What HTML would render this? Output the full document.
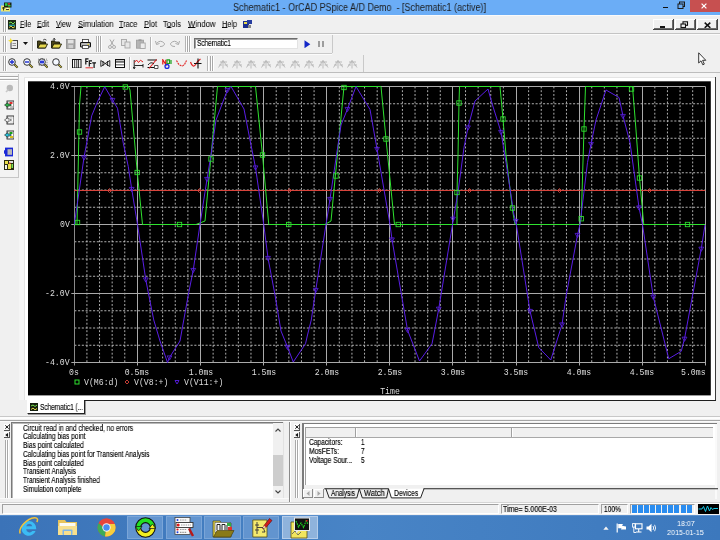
<!DOCTYPE html>
<html><head><meta charset="utf-8"><title>PSpice</title>
<style>
html,body{margin:0;padding:0;}
body{width:720px;height:540px;overflow:hidden;position:relative;background:#f0f0f0;font-family:"Liberation Sans",sans-serif;font-size:8px;color:#000;}
.abs{position:absolute;}
.ax{position:absolute;font-family:"Liberation Mono",monospace;font-size:8.2px;line-height:9px;color:#dedede;white-space:nowrap;will-change:transform;}
.t{position:absolute;white-space:nowrap;transform-origin:0 50%;-webkit-text-stroke:0.15px currentColor;will-change:transform;}
u{text-decoration:underline;text-underline-offset:0px;text-decoration-thickness:0.7px;}
</style></head><body>
<div class="abs" style="left:0px;top:0px;width:720px;height:14.5px;background:#6badf6;"></div>
<div class="abs" style="left:690px;top:0px;width:30px;height:12px;background:#c75050;"></div>
<div class="t" style="left:233.00px;top:1.70px;font-size:10px;line-height:12.00px;font-family:'Liberation Sans',sans-serif;color:#1c1c1c;transform:scaleX(0.8998);-webkit-text-stroke:0;">Schematic1 - OrCAD PSpice A/D Demo&nbsp; - [Schematic1 (active)]</div>
<svg class="abs" style="left:1px;top:1.5px" width="11" height="10" viewBox="0 0 11 10"><rect x="0" y="3.5" width="9" height="6" fill="#ece670"/><rect x="3" y="0.5" width="7.5" height="5" fill="#1a2414"/><rect x="4" y="1.2" width="2.5" height="2.6" fill="#35c83a"/><rect x="7" y="1.2" width="2" height="1.5" fill="#d83a30"/><rect x="7" y="3" width="2.5" height="1.5" fill="#35c83a"/><path d="M1 6 H4 M2.5 5 V8.5 M5 7.5 H8" stroke="#2a2a18" stroke-width="0.9"/><rect x="5.5" y="6" width="2" height="1" fill="#fff"/></svg>
<div class="abs" style="left:662.5px;top:7px;width:5px;height:1.3px;background:#111;"></div>
<svg class="abs" style="left:677px;top:1px" width="9" height="9" viewBox="0 0 9 9"><rect x="2.5" y="1" width="5" height="4.5" fill="none" stroke="#1a1a1a" stroke-width="1"/><rect x="1" y="3" width="5" height="4.5" fill="#6badf6" stroke="#1a1a1a" stroke-width="1"/></svg>
<svg class="abs" style="left:701.4px;top:2.6px" width="6" height="6" viewBox="0 0 6 6"><path d="M0.6 0.6 L5.4 5.4 M5.4 0.6 L0.6 5.4" stroke="#fff" stroke-width="1.2"/></svg>
<div class="abs" style="left:0px;top:14.5px;width:720px;height:1px;background:#fafafa;"></div>
<div class="abs" style="left:0px;top:33.2px;width:720px;height:1px;background:#c4c4c4;"></div>
<div class="abs" style="left:0px;top:34.2px;width:720px;height:1px;background:#fbfbfb;"></div>
<div class="abs" style="left:2.5px;top:17px;width:1px;height:15px;background:#a9a9a9;"></div><div class="abs" style="left:3.5px;top:17px;width:1px;height:15px;background:#fff;"></div><div class="abs" style="left:4.7px;top:17px;width:1px;height:15px;background:#a9a9a9;"></div><div class="abs" style="left:5.7px;top:17px;width:1px;height:15px;background:#fff;"></div>
<div class="abs" style="left:2.5px;top:36px;width:1px;height:16px;background:#a9a9a9;"></div><div class="abs" style="left:3.5px;top:36px;width:1px;height:16px;background:#fff;"></div><div class="abs" style="left:4.7px;top:36px;width:1px;height:16px;background:#a9a9a9;"></div><div class="abs" style="left:5.7px;top:36px;width:1px;height:16px;background:#fff;"></div>
<div class="abs" style="left:2.5px;top:56px;width:1px;height:15px;background:#a9a9a9;"></div><div class="abs" style="left:3.5px;top:56px;width:1px;height:15px;background:#fff;"></div><div class="abs" style="left:4.7px;top:56px;width:1px;height:15px;background:#a9a9a9;"></div><div class="abs" style="left:5.7px;top:56px;width:1px;height:15px;background:#fff;"></div>
<svg class="abs" style="left:8px;top:20px" width="8" height="9.5" viewBox="0 0 8 9.5"><rect width="8" height="9.5" fill="#1d2a18"/><path d="M1 3 L3 2 L5 4 L7 2" stroke="#7be34f" stroke-width="1" fill="none"/><path d="M1 7.5 L3 6 L5 8 L7 6.5" stroke="#e7d94b" stroke-width="1" fill="none"/><path d="M1 5.2 H7" stroke="#28c8d0" stroke-width="1"/></svg>
<div class="t" style="left:19.70px;top:18.70px;font-size:9.0px;line-height:10.80px;font-family:'Liberation Sans',sans-serif;color:#0a0a0a;transform:scaleX(0.7655);-webkit-text-stroke:0.05px currentColor;"><u>F</u>ile</div>
<div class="t" style="left:37.00px;top:18.70px;font-size:9.0px;line-height:10.80px;font-family:'Liberation Sans',sans-serif;color:#0a0a0a;transform:scaleX(0.7738);-webkit-text-stroke:0.05px currentColor;"><u>E</u>dit</div>
<div class="t" style="left:55.80px;top:18.70px;font-size:9.0px;line-height:10.80px;font-family:'Liberation Sans',sans-serif;color:#0a0a0a;transform:scaleX(0.7754);-webkit-text-stroke:0.05px currentColor;"><u>V</u>iew</div>
<div class="t" style="left:77.50px;top:18.70px;font-size:9.0px;line-height:10.80px;font-family:'Liberation Sans',sans-serif;color:#0a0a0a;transform:scaleX(0.8449);-webkit-text-stroke:0.05px currentColor;"><u>S</u>imulation</div>
<div class="t" style="left:119.30px;top:18.70px;font-size:9.0px;line-height:10.80px;font-family:'Liberation Sans',sans-serif;color:#0a0a0a;transform:scaleX(0.8028);-webkit-text-stroke:0.05px currentColor;"><u>T</u>race</div>
<div class="t" style="left:144.00px;top:18.70px;font-size:9.0px;line-height:10.80px;font-family:'Liberation Sans',sans-serif;color:#0a0a0a;transform:scaleX(0.8383);-webkit-text-stroke:0.05px currentColor;"><u>P</u>lot</div>
<div class="t" style="left:163.00px;top:18.70px;font-size:9.0px;line-height:10.80px;font-family:'Liberation Sans',sans-serif;color:#0a0a0a;transform:scaleX(0.8568);-webkit-text-stroke:0.05px currentColor;">T<u>o</u>ols</div>
<div class="t" style="left:187.50px;top:18.70px;font-size:9.0px;line-height:10.80px;font-family:'Liberation Sans',sans-serif;color:#0a0a0a;transform:scaleX(0.8591);-webkit-text-stroke:0.05px currentColor;"><u>W</u>indow</div>
<div class="t" style="left:221.50px;top:18.70px;font-size:9.0px;line-height:10.80px;font-family:'Liberation Sans',sans-serif;color:#0a0a0a;transform:scaleX(0.8104);-webkit-text-stroke:0.05px currentColor;"><u>H</u>elp</div>
<svg class="abs" style="left:242.5px;top:20px" width="9" height="9" viewBox="0 0 9 9"><rect x="0" y="1" width="6" height="7" fill="#1c2f8f"/><rect x="4" y="0" width="5" height="4" fill="#263c9e"/><rect x="1" y="2" width="3" height="2" fill="#e7d94b"/><rect x="5" y="5" width="3" height="3" fill="#888"/></svg>
<div class="abs" style="left:653px;top:19px;width:20.5px;height:10.7px;background:#f0f0f0;box-shadow:inset 1px 1px 0 #fff, inset -1px -1px 0 #6a6a6a;border-right:1px solid #444;border-bottom:1px solid #444;box-sizing:border-box"></div>
<div class="abs" style="left:674.5px;top:19px;width:21px;height:10.7px;background:#f0f0f0;box-shadow:inset 1px 1px 0 #fff, inset -1px -1px 0 #6a6a6a;border-right:1px solid #444;border-bottom:1px solid #444;box-sizing:border-box"></div>
<div class="abs" style="left:697px;top:19px;width:21px;height:10.7px;background:#f0f0f0;box-shadow:inset 1px 1px 0 #fff, inset -1px -1px 0 #6a6a6a;border-right:1px solid #444;border-bottom:1px solid #444;box-sizing:border-box"></div>
<div class="abs" style="left:660px;top:26px;width:4.5px;height:1.5px;background:#111;"></div>
<svg class="abs" style="left:680px;top:20.5px" width="9" height="8" viewBox="0 0 9 8"><rect x="3" y="0.8" width="4.5" height="3.5" fill="none" stroke="#111" stroke-width="1.1"/><rect x="1" y="3" width="4.5" height="3.5" fill="#f0f0f0" stroke="#111" stroke-width="1.1"/></svg>
<svg class="abs" style="left:704px;top:21.5px" width="7" height="6.5" viewBox="0 0 7 6.5"><path d="M0.7 0.6 L6.3 5.9 M6.3 0.6 L0.7 5.9" stroke="#111" stroke-width="1.5"/></svg>
<div class="abs" style="left:0px;top:53px;width:332px;height:1px;background:#c9c9c9;"></div>
<div class="abs" style="left:0px;top:54px;width:332px;height:1px;background:#fbfbfb;"></div>
<div class="abs" style="left:331.5px;top:35px;width:1px;height:18px;background:#c9c9c9;"></div>
<div class="abs" style="left:32px;top:37px;width:1px;height:14px;background:#b4b4b4;"></div><div class="abs" style="left:33px;top:37px;width:1px;height:14px;background:#fff;"></div>
<div class="abs" style="left:95.5px;top:36px;width:1px;height:16px;background:#b4b4b4;"></div><div class="abs" style="left:96.5px;top:36px;width:1px;height:16px;background:#fff;"></div>
<div class="abs" style="left:97.5px;top:36px;width:1px;height:16px;background:#a9a9a9;"></div><div class="abs" style="left:98.5px;top:36px;width:1px;height:16px;background:#fff;"></div><div class="abs" style="left:99.7px;top:36px;width:1px;height:16px;background:#a9a9a9;"></div><div class="abs" style="left:100.7px;top:36px;width:1px;height:16px;background:#fff;"></div>
<div class="abs" style="left:150px;top:37px;width:1px;height:14px;background:#b4b4b4;"></div><div class="abs" style="left:151px;top:37px;width:1px;height:14px;background:#fff;"></div>
<div class="abs" style="left:184.5px;top:36px;width:1px;height:16px;background:#b4b4b4;"></div><div class="abs" style="left:185.5px;top:36px;width:1px;height:16px;background:#fff;"></div>
<div class="abs" style="left:187px;top:36px;width:1px;height:16px;background:#a9a9a9;"></div><div class="abs" style="left:188px;top:36px;width:1px;height:16px;background:#fff;"></div><div class="abs" style="left:189.2px;top:36px;width:1px;height:16px;background:#a9a9a9;"></div><div class="abs" style="left:190.2px;top:36px;width:1px;height:16px;background:#fff;"></div>
<svg class="abs" style="left:8px;top:37.5px" width="10" height="11" viewBox="0 0 10 11"><rect x="3" y="2.5" width="6.5" height="8" fill="#ededed" stroke="#333" stroke-width="0.9"/><path d="M4.5 5.5h3.5M4.5 7.5h3.5" stroke="#8a8a8a" stroke-width="0.9"/><path d="M2.7 0 L3.6 2 L5.6 2.7 L3.6 3.5 L2.7 5.6 L1.8 3.5 L0 2.7 L1.8 2Z" fill="#f4e030"/></svg>
<svg class="abs" style="left:22.5px;top:42px" width="5" height="3" viewBox="0 0 5 3"><path d="M0 0 L5 0 L2.5 3Z" fill="#111"/></svg>
<svg class="abs" style="left:37px;top:38px" width="11" height="10.5" viewBox="0 0 11 10.5"><path d="M0.5 3 L3.5 3 L4.5 4 L8.5 4 L8.5 10 L0.5 10Z" fill="#4a4418" stroke="#1a1a08" stroke-width="0.9"/><path d="M0.8 10 L2.8 6 L10.5 6 L8.5 10Z" fill="#e6d84e" stroke="#1a1a08" stroke-width="0.9"/><path d="M6 2.2 Q7.8 0.3 9.5 2.2" stroke="#222" stroke-width="0.8" fill="none"/></svg>
<svg class="abs" style="left:50.5px;top:38px" width="11" height="10.5" viewBox="0 0 11 10.5"><path d="M0.5 3 L3.5 3 L4.5 4 L8.5 4 L8.5 10 L0.5 10Z" fill="#4a4418" stroke="#1a1a08" stroke-width="0.9"/><path d="M0.8 10 L2.8 6 L10.5 6 L8.5 10Z" fill="#e6d84e" stroke="#1a1a08" stroke-width="0.9"/><path d="M2 1.8 L3.2 0.2 L4.4 1.8 M3.2 0.4 L3.2 3" stroke="#222" stroke-width="0.8" fill="none"/></svg>
<svg class="abs" style="left:66px;top:38.5px" width="9.5" height="10" viewBox="0 0 9.5 10"><rect x="0.5" y="0.5" width="8.5" height="9" fill="#a9a9a9" stroke="#8c8c8c" stroke-width="0.8"/><rect x="2" y="0.8" width="5.5" height="3.5" fill="#e3e3e3"/><rect x="2.5" y="6" width="4.5" height="3.2" fill="#cfcfcf"/></svg>
<svg class="abs" style="left:80px;top:38.5px" width="11" height="10" viewBox="0 0 11 10"><rect x="2.5" y="0.5" width="6" height="3.5" fill="#fff" stroke="#333" stroke-width="0.8"/><rect x="0.5" y="3.5" width="10" height="4.5" rx="1" fill="#b8b8b8" stroke="#111" stroke-width="1.1"/><rect x="2.5" y="6.5" width="6" height="3" fill="#fff" stroke="#333" stroke-width="0.8"/><rect x="7.5" y="4.8" width="1.6" height="1" fill="#e8d020"/></svg>
<svg class="abs" style="left:107.5px;top:38.5px" width="8" height="10" viewBox="0 0 8 10"><path d="M2 0.5 L5.5 6.5 M6 0.5 L2.5 6.5" stroke="#a6a6a6" stroke-width="1"/><circle cx="2" cy="8" r="1.5" fill="none" stroke="#a6a6a6" stroke-width="0.9"/><circle cx="6" cy="8" r="1.5" fill="none" stroke="#a6a6a6" stroke-width="0.9"/></svg>
<svg class="abs" style="left:121px;top:38.5px" width="10" height="10" viewBox="0 0 10 10"><rect x="0.5" y="0.5" width="5" height="6" fill="#e6e6e6" stroke="#a6a6a6" stroke-width="0.9"/><rect x="4" y="3" width="5" height="6" fill="#e6e6e6" stroke="#a6a6a6" stroke-width="0.9"/></svg>
<svg class="abs" style="left:135.5px;top:38.5px" width="10" height="10" viewBox="0 0 10 10"><rect x="0.5" y="1.2" width="7" height="8" fill="#b5b5b5" stroke="#a0a0a0" stroke-width="0.9"/><rect x="2.5" y="0.3" width="3" height="1.8" fill="#9a9a9a"/><rect x="4.2" y="4" width="5" height="5.5" fill="#ececec" stroke="#a6a6a6" stroke-width="0.9"/></svg>
<svg class="abs" style="left:154.5px;top:39px" width="11" height="9" viewBox="0 0 11 9"><path d="M1.5 4.5 Q5.5 0 9.5 4.5 Q9.5 7.5 5 7.5" fill="none" stroke="#a9a9a9" stroke-width="1"/><path d="M0.5 2 L1.5 5.5 L4.5 4.5" fill="none" stroke="#a9a9a9" stroke-width="1"/></svg>
<svg class="abs" style="left:168.5px;top:39px" width="11" height="9" viewBox="0 0 11 9"><path d="M9.5 4.5 Q5.5 0 1.5 4.5 Q1.5 7.5 6 7.5" fill="none" stroke="#a9a9a9" stroke-width="1"/><path d="M10.5 2 L9.5 5.5 L6.5 4.5" fill="none" stroke="#a9a9a9" stroke-width="1"/></svg>
<div class="abs" style="left:193.5px;top:37.5px;width:104.5px;height:11.3px;background:#fff;box-sizing:border-box;border-top:1px solid #6d6d6d;border-left:1px solid #6d6d6d;border-right:1px solid #e3e3e3;border-bottom:1px solid #e3e3e3;box-shadow:inset 1px 1px 0 #a0a0a0"></div>
<div class="t" style="left:197.00px;top:38.14px;font-size:8.6px;line-height:10.32px;font-family:'Liberation Sans',sans-serif;color:#000;transform:scaleX(0.7567);">Schematic1</div>
<svg class="abs" style="left:303.5px;top:39.5px" width="7" height="8.5" viewBox="0 0 7 8.5"><path d="M0.5 0.3 L6.3 4.25 L0.5 8.2Z" fill="#1428c8"/></svg>
<div class="abs" style="left:318px;top:40.5px;width:2.2px;height:6.5px;background:#9d9d9d;"></div>
<div class="abs" style="left:322.2px;top:40.5px;width:2.2px;height:6.5px;background:#9d9d9d;"></div>
<div class="abs" style="left:0px;top:72.2px;width:720px;height:1px;background:#bdbdbd;"></div>
<div class="abs" style="left:0px;top:73.2px;width:720px;height:1px;background:#fafafa;"></div>
<div class="abs" style="left:362.5px;top:55px;width:1px;height:17px;background:#c9c9c9;"></div>
<svg class="abs" style="left:8px;top:58px" width="10.5" height="10.5" viewBox="0 0 10.5 10.5"><circle cx="4" cy="4" r="3.3" fill="#f4f8ff" stroke="#333" stroke-width="1"/><path d="M2 4 H6 M4 2 V6" stroke="#1b2ad0" stroke-width="1.3"/><path d="M6.5 6.5 L9.6 9.6" stroke="#3a3a1a" stroke-width="2"/><path d="M6.8 6.8 L9.4 9.4" stroke="#d8c440" stroke-width="0.9"/></svg>
<svg class="abs" style="left:23px;top:58px" width="10.5" height="10.5" viewBox="0 0 10.5 10.5"><circle cx="4" cy="4" r="3.3" fill="#f4f8ff" stroke="#333" stroke-width="1"/><path d="M2 4 H6" stroke="#1b2ad0" stroke-width="1.4"/><path d="M6.5 6.5 L9.6 9.6" stroke="#3a3a1a" stroke-width="2"/><path d="M6.8 6.8 L9.4 9.4" stroke="#d8c440" stroke-width="0.9"/></svg>
<svg class="abs" style="left:37.5px;top:58px" width="10.5" height="10.5" viewBox="0 0 10.5 10.5"><circle cx="4" cy="4" r="3.3" fill="#f4f8ff" stroke="#333" stroke-width="1"/><rect x="2" y="2.6" width="4" height="2.8" fill="#2b3bd8"/><rect x="0" y="1.2" width="9" height="6" fill="none" stroke="#555" stroke-width="0.7" stroke-dasharray="1,1"/><path d="M6.5 6.5 L9.6 9.6" stroke="#3a3a1a" stroke-width="2"/><path d="M6.8 6.8 L9.4 9.4" stroke="#d8c440" stroke-width="0.9"/></svg>
<svg class="abs" style="left:52px;top:58px" width="10.5" height="10.5" viewBox="0 0 10.5 10.5"><circle cx="4" cy="4" r="3.3" fill="#f4f8ff" stroke="#333" stroke-width="1"/><path d="M6.5 6.5 L9.6 9.6" stroke="#3a3a1a" stroke-width="2"/><path d="M6.8 6.8 L9.4 9.4" stroke="#d8c440" stroke-width="0.9"/></svg>
<div class="abs" style="left:67px;top:57px;width:1px;height:13px;background:#b4b4b4;"></div><div class="abs" style="left:68px;top:57px;width:1px;height:13px;background:#fff;"></div>
<svg class="abs" style="left:72px;top:58.5px" width="9.5" height="9.5" viewBox="0 0 9.5 9.5"><rect x="0.5" y="0.5" width="8.5" height="8.5" fill="#fff" stroke="#111" stroke-width="1"/><path d="M2.7 0.5V9 M4.8 0.5V9 M6.6 0.5V9" stroke="#111" stroke-width="0.9"/></svg>
<svg class="abs" style="left:85px;top:58px" width="11.5" height="10.5" viewBox="0 0 11.5 10.5"><path d="M0.8 6.5 V0.8 H3.5 M0.8 3.5 H3" stroke="#111" stroke-width="1.2" fill="none"/><path d="M4.3 8.5 V2.8 H7 M4.3 5.5 H6.5" stroke="#111" stroke-width="1.2" fill="none"/><path d="M7.2 4.8 H11 M9.1 4.8 V10" stroke="#111" stroke-width="1.2" fill="none"/><path d="M0.5 9.8 H8" stroke="#e03030" stroke-width="1"/></svg>
<svg class="abs" style="left:100px;top:59px" width="10.5" height="9" viewBox="0 0 10.5 9"><path d="M0.8 1.5 L9.8 7.5 M0.8 7.5 L9.8 1.5 M0.8 1.5 V7.5 M9.8 1.5 V7.5 M3 2 V7 M7.6 2 V7" stroke="#111" stroke-width="0.85" fill="none"/></svg>
<svg class="abs" style="left:114.5px;top:59px" width="10" height="9" viewBox="0 0 10 9"><rect x="0.5" y="0.5" width="9" height="8" fill="#fff" stroke="#111" stroke-width="1"/><path d="M1 3.2H9 M1 5.8H9" stroke="#8c8c8c" stroke-width="1.6"/><path d="M0.5 2.2H9.5" stroke="#111" stroke-width="0.7"/></svg>
<div class="abs" style="left:128.5px;top:57px;width:1px;height:13px;background:#b4b4b4;"></div><div class="abs" style="left:129.5px;top:57px;width:1px;height:13px;background:#fff;"></div>
<svg class="abs" style="left:133px;top:58.5px" width="11" height="10" viewBox="0 0 11 10"><path d="M1.2 1 V9.5 M0.2 8 L1.2 9.8 L2.2 8" stroke="#111" stroke-width="0.9" fill="none"/><path d="M1.5 3.5 L3.5 1 L5.5 3.5 L7.5 1.2 L10 3" stroke="#e02020" stroke-width="1" fill="none"/><path d="M1.5 6.5 H10 M10 5 V8.5" stroke="#111" stroke-width="0.9"/></svg>
<svg class="abs" style="left:147px;top:58.5px" width="11.5" height="10" viewBox="0 0 11.5 10"><path d="M0.5 1 H10 M0.5 8.5 H7" stroke="#111" stroke-width="1" fill="none"/><path d="M9.5 0.5 L2 9.5" stroke="#e02020" stroke-width="1.1"/><path d="M1 6 Q4 2 7 5" stroke="#111" stroke-width="0.9" fill="none"/><path d="M7.5 6.5 h3.5 v3 h-3.5z" fill="#fff" stroke="#111" stroke-width="0.7"/></svg>
<svg class="abs" style="left:162px;top:58.5px" width="10.5" height="10" viewBox="0 0 10.5 10"><path d="M0.8 5.5 V0.8 L3.8 5.5 V0.8" stroke="#e01818" stroke-width="1.2" fill="none"/><path d="M5 0.8 V4.5 H7.5 V0.8 Z" stroke="#18a018" stroke-width="1.2" fill="none"/><path d="M9 1 V5" stroke="#18a018" stroke-width="1.2"/><circle cx="5" cy="7.5" r="2" fill="none" stroke="#1828e0" stroke-width="1.3"/></svg>
<svg class="abs" style="left:176px;top:59px" width="11" height="9" viewBox="0 0 11 9"><path d="M0.5 1.5 L2.5 5 L4.5 6.5 L6.5 7 L8.5 5.5 L10.5 1.5" stroke="#e02020" stroke-width="1.1" fill="none" stroke-dasharray="2,0.8"/></svg>
<svg class="abs" style="left:190px;top:58px" width="11.5" height="11" viewBox="0 0 11.5 11"><path d="M0.5 4 Q3 11 6 6 Q8 2.5 10.5 1" stroke="#e02020" stroke-width="1.2" fill="none"/><path d="M8 0.5 V10.5 M4 5.5 H11.5" stroke="#111" stroke-width="1.1"/></svg>
<div class="abs" style="left:207px;top:56px;width:1px;height:15px;background:#b4b4b4;"></div><div class="abs" style="left:208px;top:56px;width:1px;height:15px;background:#fff;"></div>
<div class="abs" style="left:209.5px;top:56px;width:1px;height:15px;background:#a9a9a9;"></div><div class="abs" style="left:210.5px;top:56px;width:1px;height:15px;background:#fff;"></div><div class="abs" style="left:211.7px;top:56px;width:1px;height:15px;background:#a9a9a9;"></div><div class="abs" style="left:212.7px;top:56px;width:1px;height:15px;background:#fff;"></div>
<svg class="abs" style="left:217.5px;top:58.5px" width="10.5" height="10" viewBox="0 0 10.5 10"><path d="M0.5 8.5 L5 1.5 L10 8.5 M2 3 L9 3 M5 1.5 V9.5 M1 6 H4 M6.5 6 H10" stroke="#b4b4b4" stroke-width="0.85" fill="none"/></svg>
<svg class="abs" style="left:231.9px;top:58.5px" width="10.5" height="10" viewBox="0 0 10.5 10"><path d="M0.5 8.5 L5 1.5 L10 8.5 M2 3 L9 3 M5 1.5 V9.5 M1 6 H4 M6.5 6 H10" stroke="#b4b4b4" stroke-width="0.85" fill="none"/></svg>
<svg class="abs" style="left:246.3px;top:58.5px" width="10.5" height="10" viewBox="0 0 10.5 10"><path d="M0.5 8.5 L5 1.5 L10 8.5 M2 3 L9 3 M5 1.5 V9.5 M1 6 H4 M6.5 6 H10" stroke="#b4b4b4" stroke-width="0.85" fill="none"/></svg>
<svg class="abs" style="left:260.7px;top:58.5px" width="10.5" height="10" viewBox="0 0 10.5 10"><path d="M0.5 8.5 L5 1.5 L10 8.5 M2 3 L9 3 M5 1.5 V9.5 M1 6 H4 M6.5 6 H10" stroke="#b4b4b4" stroke-width="0.85" fill="none"/></svg>
<svg class="abs" style="left:275.1px;top:58.5px" width="10.5" height="10" viewBox="0 0 10.5 10"><path d="M0.5 8.5 L5 1.5 L10 8.5 M2 3 L9 3 M5 1.5 V9.5 M1 6 H4 M6.5 6 H10" stroke="#b4b4b4" stroke-width="0.85" fill="none"/></svg>
<svg class="abs" style="left:289.5px;top:58.5px" width="10.5" height="10" viewBox="0 0 10.5 10"><path d="M0.5 8.5 L5 1.5 L10 8.5 M2 3 L9 3 M5 1.5 V9.5 M1 6 H4 M6.5 6 H10" stroke="#b4b4b4" stroke-width="0.85" fill="none"/></svg>
<svg class="abs" style="left:303.9px;top:58.5px" width="10.5" height="10" viewBox="0 0 10.5 10"><path d="M0.5 8.5 L5 1.5 L10 8.5 M2 3 L9 3 M5 1.5 V9.5 M1 6 H4 M6.5 6 H10" stroke="#b4b4b4" stroke-width="0.85" fill="none"/></svg>
<svg class="abs" style="left:318.3px;top:58.5px" width="10.5" height="10" viewBox="0 0 10.5 10"><path d="M0.5 8.5 L5 1.5 L10 8.5 M2 3 L9 3 M5 1.5 V9.5 M1 6 H4 M6.5 6 H10" stroke="#b4b4b4" stroke-width="0.85" fill="none"/></svg>
<svg class="abs" style="left:332.7px;top:58.5px" width="10.5" height="10" viewBox="0 0 10.5 10"><path d="M0.5 8.5 L5 1.5 L10 8.5 M2 3 L9 3 M5 1.5 V9.5 M1 6 H4 M6.5 6 H10" stroke="#b4b4b4" stroke-width="0.85" fill="none"/></svg>
<svg class="abs" style="left:347.1px;top:58.5px" width="10.5" height="10" viewBox="0 0 10.5 10"><path d="M0.5 8.5 L5 1.5 L10 8.5 M2 3 L9 3 M5 1.5 V9.5 M1 6 H4 M6.5 6 H10" stroke="#b4b4b4" stroke-width="0.85" fill="none"/></svg>
<svg class="abs" style="left:698px;top:52px" width="9" height="14" viewBox="0 0 9 14"><path d="M0.7 0.8 V11 L3 8.8 L4.8 12.8 L6.3 12.1 L4.6 8.3 L7.8 8.3 Z" fill="#fff" stroke="#222" stroke-width="0.9"/></svg>
<div class="abs" style="left:0px;top:74px;width:18.5px;height:103.5px;background:#f3f3f3;border-right:1px solid #c6c6c6;border-bottom:1px solid #c6c6c6;box-sizing:border-box"></div>
<div class="abs" style="left:0px;top:76.3px;width:18px;height:1px;background:#a9a9a9;"></div>
<div class="abs" style="left:0px;top:77.3px;width:18px;height:1px;background:#fff;"></div>
<div class="abs" style="left:0px;top:78.8px;width:18px;height:1px;background:#a9a9a9;"></div>
<div class="abs" style="left:0px;top:79.8px;width:18px;height:1px;background:#fff;"></div>
<svg class="abs" style="left:4.5px;top:83.5px" width="9" height="9" viewBox="0 0 9 9"><circle cx="4.8" cy="4" r="3.2" fill="#b9b9b9"/><path d="M1 8 L3.5 5.5" stroke="#c9c9c9" stroke-width="1.6"/></svg>
<svg class="abs" style="left:3.5px;top:100px" width="10.5" height="10" viewBox="0 0 10.5 10"><rect x="3" y="1" width="7" height="8" fill="#fdfdfd" stroke="#222" stroke-width="0.9"/><path d="M0.5 5 L4 2.5 V4 H7 V6 H4 V7.5Z" fill="#2fb04a" stroke="#222" stroke-width="0.6"/><rect x="5.5" y="2" width="3" height="2" fill="#e03030"/><rect x="6" y="6" width="3" height="2" fill="#c0c0c0"/></svg>
<svg class="abs" style="left:3.5px;top:115px" width="10.5" height="10" viewBox="0 0 10.5 10"><rect x="3" y="1" width="7" height="8" fill="#fdfdfd" stroke="#222" stroke-width="0.9"/><path d="M0.5 5 L4 2.5 V4 H7 V6 H4 V7.5Z" fill="#f4f4f4" stroke="#222" stroke-width="0.6"/><rect x="5.5" y="2" width="3" height="2" fill="#d8d8d8"/><rect x="6" y="6" width="3" height="2" fill="#e8e8e8"/></svg>
<svg class="abs" style="left:3.5px;top:129.5px" width="10.5" height="10" viewBox="0 0 10.5 10"><rect x="3" y="1" width="7" height="8" fill="#fdfdfd" stroke="#222" stroke-width="0.9"/><path d="M0.5 5 L4 2.5 V4 H7 V6 H4 V7.5Z" fill="#28c0d8" stroke="#222" stroke-width="0.6"/><rect x="5.5" y="2" width="3" height="2" fill="#18a018"/><rect x="6" y="6" width="3" height="2" fill="#d8c020"/></svg>
<svg class="abs" style="left:4px;top:146.5px" width="9.5" height="10" viewBox="0 0 9.5 10"><rect x="1" y="0.6" width="8" height="8.8" fill="#1a28d8"/><rect x="3.5" y="2.2" width="4.5" height="5.6" fill="#b8b8b8"/><path d="M0 3 L3.5 5 L0 7Z" fill="#1a28d8"/></svg>
<svg class="abs" style="left:3.5px;top:159.5px" width="10" height="10" viewBox="0 0 10 10"><rect width="10" height="10" fill="#2a2a12"/><rect x="1" y="1" width="3" height="3" fill="#e7dc4a"/><rect x="5" y="1" width="4" height="2" fill="#e0e0e0"/><rect x="1" y="5" width="2" height="4" fill="#f0f0f0"/><rect x="4" y="4" width="3" height="5" fill="#e7dc4a"/><rect x="7.5" y="4" width="1.5" height="4" fill="#7be34f"/><rect x="5" y="2.5" width="1.5" height="1.5" fill="#e05020"/></svg>
<div class="abs" style="left:19px;top:73.2px;width:697px;height:327px;background:#f5f5f5;box-sizing:border-box;border-right:1px solid #3c3c3c;"></div>
<div class="abs" style="left:24px;top:77.3px;width:691px;height:322.5px;background:#e4e4e4;"></div>
<div class="abs" style="left:25px;top:78.3px;width:690px;height:321.4px;background:#fff;"></div>
<div class="abs" style="left:19px;top:399.7px;width:8px;height:2px;background:#f0f0f0;"></div>
<div class="abs" style="left:716px;top:73.2px;width:4px;height:4.5px;background:#f0f0f0;"></div>
<div class="abs" style="left:715px;top:73.2px;width:1px;height:4.3px;background:#f5f5f5;"></div>
<div class="abs" style="left:27px;top:400px;width:57.5px;height:14px;background:#fff;box-sizing:border-box;border-left:1px solid #fff;border-right:1px solid #222;border-bottom:1px solid #222;box-shadow:1px 1px 0 #9a9a9a"></div>
<div class="abs" style="left:84.5px;top:400px;width:631px;height:1px;background:#1e1e1e;"></div>
<svg class="abs" style="left:29.5px;top:402.5px" width="8" height="8.5" viewBox="0 0 8 8.5"><rect width="8" height="8.5" fill="#15200f"/><path d="M1 3 L3 2 L5 3.5 L7 2" stroke="#7be34f" stroke-width="1" fill="none"/><path d="M1 6.5 L3 5 L5 6.8 L7 5.5" stroke="#e7d94b" stroke-width="1" fill="none"/></svg>
<div class="t" style="left:39.50px;top:401.80px;font-size:8.5px;line-height:10.20px;font-family:'Liberation Sans',sans-serif;color:#000;transform:scaleX(0.7586);">Schematic1 (...</div>
<div class="abs" style="left:0px;top:416.3px;width:720px;height:1px;background:#c8c8c8;"></div>
<div class="abs" style="left:0px;top:417.3px;width:720px;height:2.2px;background:#fdfdfd;"></div>
<div class="abs" style="left:0px;top:419.7px;width:720px;height:1px;background:#a5a5a5;"></div>
<div class="abs" style="left:0px;top:420.7px;width:720px;height:1px;background:#fafafa;"></div>
<div class="abs" style="left:11px;top:422px;width:272px;height:76px;background:#fff;box-sizing:border-box;border-top:1px solid #7a7a7a;border-left:1px solid #7a7a7a;box-shadow:inset 1px 1px 0 #b8b8b8"></div>
<div class="abs" style="left:283px;top:422px;width:1px;height:76px;background:#e2e2e2;"></div>
<div class="abs" style="left:289px;top:421.7px;width:1px;height:80px;background:#8a8a8a;"></div>
<div class="abs" style="left:290px;top:421.7px;width:1px;height:80px;background:#fff;"></div>
<div class="abs" style="left:0px;top:498px;width:289px;height:1px;background:#fafafa;"></div>
<div class="abs" style="left:3.7px;top:424.3px;width:6px;height:6.3px;background:#f0f0f0;box-sizing:border-box;border-right:1px solid #555;border-bottom:1px solid #555;box-shadow:inset 1px 1px 0 #fff"></div><svg class="abs" style="left:4.5px;top:425.2px" width="4" height="4" viewBox="0 0 4 4"><path d="M0.3 0.3L3.7 3.7M3.7 0.3L0.3 3.7" stroke="#111" stroke-width="0.9"/></svg>
<div class="abs" style="left:3.7px;top:431.5px;width:6px;height:6.3px;background:#f0f0f0;box-sizing:border-box;border-right:1px solid #555;border-bottom:1px solid #555;box-shadow:inset 1px 1px 0 #fff"></div><svg class="abs" style="left:4.7px;top:432.5px" width="3.5" height="4" viewBox="0 0 3.5 4"><path d="M3 0 L0.3 2 L3 4Z" fill="#111"/></svg>
<div class="abs" style="left:5px;top:440px;width:1px;height:58px;background:#a9a9a9;"></div>
<div class="abs" style="left:6px;top:440px;width:1px;height:58px;background:#fff;"></div>
<div class="abs" style="left:7.3px;top:440px;width:1px;height:58px;background:#a9a9a9;"></div>
<div class="abs" style="left:8.3px;top:440px;width:1px;height:58px;background:#fff;"></div>
<div class="t" style="left:23.00px;top:422.68px;font-size:8.7px;line-height:10.44px;font-family:'Liberation Sans',sans-serif;color:#000;transform:scaleX(0.7604);">Circuit read in and checked, no errors</div>
<div class="t" style="left:23.00px;top:431.42px;font-size:8.7px;line-height:10.44px;font-family:'Liberation Sans',sans-serif;color:#000;transform:scaleX(0.7558);">Calculating bias point</div>
<div class="t" style="left:23.00px;top:440.16px;font-size:8.7px;line-height:10.44px;font-family:'Liberation Sans',sans-serif;color:#000;transform:scaleX(0.7645);">Bias point calculated</div>
<div class="t" style="left:23.00px;top:448.90px;font-size:8.7px;line-height:10.44px;font-family:'Liberation Sans',sans-serif;color:#000;transform:scaleX(0.7539);">Calculating bias point for Transient Analysis</div>
<div class="t" style="left:23.00px;top:457.64px;font-size:8.7px;line-height:10.44px;font-family:'Liberation Sans',sans-serif;color:#000;transform:scaleX(0.7645);">Bias point calculated</div>
<div class="t" style="left:23.00px;top:466.38px;font-size:8.7px;line-height:10.44px;font-family:'Liberation Sans',sans-serif;color:#000;transform:scaleX(0.7542);">Transient Analysis</div>
<div class="t" style="left:23.00px;top:475.12px;font-size:8.7px;line-height:10.44px;font-family:'Liberation Sans',sans-serif;color:#000;transform:scaleX(0.7499);">Transient Analysis finished</div>
<div class="t" style="left:23.00px;top:483.86px;font-size:8.7px;line-height:10.44px;font-family:'Liberation Sans',sans-serif;color:#000;transform:scaleX(0.7468);">Simulation complete</div>
<div class="abs" style="left:273px;top:423px;width:9.7px;height:74.5px;background:#f0f0f0;"></div>
<div class="abs" style="left:273px;top:454.5px;width:9.7px;height:31.5px;background:#cdcdcd;"></div>
<svg class="abs" style="left:275px;top:427.5px" width="6" height="4" viewBox="0 0 6 4"><path d="M0.5 3.5 L3 1 L5.5 3.5" stroke="#444" stroke-width="1.1" fill="none"/></svg>
<svg class="abs" style="left:275px;top:490px" width="6" height="4" viewBox="0 0 6 4"><path d="M0.5 0.5 L3 3 L5.5 0.5" stroke="#444" stroke-width="1.1" fill="none"/></svg>
<div class="abs" style="left:293.7px;top:424.3px;width:6px;height:6.3px;background:#f0f0f0;box-sizing:border-box;border-right:1px solid #555;border-bottom:1px solid #555;box-shadow:inset 1px 1px 0 #fff"></div><svg class="abs" style="left:294.5px;top:425.2px" width="4" height="4" viewBox="0 0 4 4"><path d="M0.3 0.3L3.7 3.7M3.7 0.3L0.3 3.7" stroke="#111" stroke-width="0.9"/></svg>
<div class="abs" style="left:293.7px;top:431.8px;width:6px;height:6.3px;background:#f0f0f0;box-sizing:border-box;border-right:1px solid #555;border-bottom:1px solid #555;box-shadow:inset 1px 1px 0 #fff"></div><svg class="abs" style="left:294.7px;top:432.8px" width="3.5" height="4" viewBox="0 0 3.5 4"><path d="M3 0 L0.3 2 L3 4Z" fill="#111"/></svg>
<div class="abs" style="left:295px;top:440px;width:1px;height:58px;background:#a9a9a9;"></div>
<div class="abs" style="left:296px;top:440px;width:1px;height:58px;background:#fff;"></div>
<div class="abs" style="left:297.3px;top:440px;width:1px;height:58px;background:#a9a9a9;"></div>
<div class="abs" style="left:298.3px;top:440px;width:1px;height:58px;background:#fff;"></div>
<div class="abs" style="left:302px;top:422.7px;width:415px;height:1.4px;background:#7c7c7c;"></div>
<div class="abs" style="left:302px;top:422.7px;width:1.6px;height:76px;background:#7c7c7c;"></div>
<div class="abs" style="left:303.6px;top:424.1px;width:411.4px;height:61px;background:#fff;"></div>
<div class="abs" style="left:304.5px;top:426.8px;width:408.5px;height:1px;background:#a0a0a0;"></div>
<div class="abs" style="left:304.5px;top:427.8px;width:408.5px;height:9.5px;background:#f0f0f0;"></div>
<div class="abs" style="left:304.5px;top:437.3px;width:408.5px;height:1px;background:#a8a8a8;"></div>
<div class="abs" style="left:304.5px;top:426.8px;width:1px;height:58px;background:#a0a0a0;"></div>
<div class="abs" style="left:354.5px;top:427.8px;width:1px;height:9.5px;background:#a0a0a0;"></div>
<div class="abs" style="left:355.5px;top:427.8px;width:1px;height:9.5px;background:#fff;"></div>
<div class="abs" style="left:511px;top:427.8px;width:1px;height:9.5px;background:#a0a0a0;"></div>
<div class="abs" style="left:512px;top:427.8px;width:1px;height:9.5px;background:#fff;"></div>
<div class="abs" style="left:715px;top:424.1px;width:2px;height:75px;background:#fafafa;"></div>
<div class="t" style="left:308.70px;top:437.08px;font-size:8.7px;line-height:10.44px;font-family:'Liberation Sans',sans-serif;color:#000;transform:scaleX(0.7614);">Capacitors:</div>
<div class="t" style="left:360.50px;top:437.08px;font-size:8.7px;line-height:10.44px;font-family:'Liberation Sans',sans-serif;color:#000;transform:scaleX(0.7441);">1</div>
<div class="t" style="left:308.70px;top:445.83px;font-size:8.7px;line-height:10.44px;font-family:'Liberation Sans',sans-serif;color:#000;transform:scaleX(0.7758);">MosFETs:</div>
<div class="t" style="left:360.50px;top:445.83px;font-size:8.7px;line-height:10.44px;font-family:'Liberation Sans',sans-serif;color:#000;transform:scaleX(0.7441);">7</div>
<div class="t" style="left:308.70px;top:454.58px;font-size:8.7px;line-height:10.44px;font-family:'Liberation Sans',sans-serif;color:#000;transform:scaleX(0.7687);">Voltage Sour...</div>
<div class="t" style="left:360.50px;top:454.58px;font-size:8.7px;line-height:10.44px;font-family:'Liberation Sans',sans-serif;color:#000;transform:scaleX(0.7441);">5</div>
<div class="abs" style="left:303px;top:488.75px;width:9.8px;height:9.7px;background:#f0f0f0;box-sizing:border-box;border-right:1px solid #8a8a8a;border-bottom:1px solid #8a8a8a;box-shadow:inset 1px 1px 0 #fff"></div>
<div class="abs" style="left:313.6px;top:488.75px;width:10px;height:9.7px;background:#f0f0f0;box-sizing:border-box;border-right:1px solid #8a8a8a;border-bottom:1px solid #8a8a8a;box-shadow:inset 1px 1px 0 #fff"></div>
<svg class="abs" style="left:305.8px;top:491.2px" width="4" height="5" viewBox="0 0 4 5"><path d="M3.5 0 L0.5 2.5 L3.5 5Z" fill="#a5a5a5"/></svg>
<svg class="abs" style="left:317px;top:491.2px" width="4" height="5" viewBox="0 0 4 5"><path d="M0.5 0 L3.5 2.5 L0.5 5Z" fill="#a5a5a5"/></svg>
<svg class="abs" style="left:320px;top:485px" width="398" height="14" viewBox="0 0 398 14"><path d="M68.5 3.75 L71.4 12.9 H100.6 L104 3.75Z" fill="#fff"/><path d="M4.3 3.75 H68.5 M103.5 3.75 H398" stroke="#222" stroke-width="1"/><path d="M5.9 3.75 L9.2 12.9 H36.8 L39.3 3.75 L42.3 12.9 H66.6 L68.5 3.75 L71.4 12.9 H100.6 L104 3.75" fill="none" stroke="#222" stroke-width="1"/></svg>
<div class="t" style="left:331.10px;top:488.30px;font-size:8.5px;line-height:10.20px;font-family:'Liberation Sans',sans-serif;color:#000;transform:scaleX(0.7551);">Analysis</div>
<div class="t" style="left:364.20px;top:488.30px;font-size:8.5px;line-height:10.20px;font-family:'Liberation Sans',sans-serif;color:#000;transform:scaleX(0.8749);">Watch</div>
<div class="t" style="left:394.00px;top:488.30px;font-size:8.5px;line-height:10.20px;font-family:'Liberation Sans',sans-serif;color:#000;transform:scaleX(0.8038);">Devices</div>
<div class="abs" style="left:0px;top:501.7px;width:720px;height:1px;background:#d5d5d5;"></div>
<div class="abs" style="left:0px;top:502.7px;width:720px;height:1px;background:#fdfdfd;"></div>
<div class="abs" style="left:2px;top:503.7px;width:497px;height:10.3px;background:#f0f0f0;box-sizing:border-box;border-top:1px solid #a0a0a0;border-left:1px solid #a0a0a0;border-right:1px solid #fff;border-bottom:1px solid #fff"></div>
<div class="abs" style="left:500.5px;top:503.7px;width:98.5px;height:10.3px;background:#f0f0f0;box-sizing:border-box;border-top:1px solid #a0a0a0;border-left:1px solid #a0a0a0;border-right:1px solid #fff;border-bottom:1px solid #fff"></div>
<div class="abs" style="left:600.5px;top:503.7px;width:27.5px;height:10.3px;background:#f0f0f0;box-sizing:border-box;border-top:1px solid #a0a0a0;border-left:1px solid #a0a0a0;border-right:1px solid #fff;border-bottom:1px solid #fff"></div>
<div class="abs" style="left:630px;top:503.7px;width:65px;height:10.3px;background:#f0f0f0;box-sizing:border-box;border-top:1px solid #a0a0a0;border-left:1px solid #a0a0a0;border-right:1px solid #fff;border-bottom:1px solid #fff"></div>
<div class="t" style="left:503.30px;top:503.74px;font-size:8.6px;line-height:10.32px;font-family:'Liberation Sans',sans-serif;color:#000;transform:scaleX(0.8196);">Time= 5.000E-03</div>
<div class="t" style="left:604.20px;top:503.74px;font-size:8.6px;line-height:10.32px;font-family:'Liberation Sans',sans-serif;color:#000;transform:scaleX(0.7729);">100%</div>
<div class="abs" style="left:631.7px;top:505px;width:5.1px;height:8px;background:#2a8df0;"></div>
<div class="abs" style="left:637.8000000000001px;top:505px;width:5.1px;height:8px;background:#2a8df0;"></div>
<div class="abs" style="left:643.9000000000001px;top:505px;width:5.1px;height:8px;background:#2a8df0;"></div>
<div class="abs" style="left:650.0px;top:505px;width:5.1px;height:8px;background:#2a8df0;"></div>
<div class="abs" style="left:656.1px;top:505px;width:5.1px;height:8px;background:#2a8df0;"></div>
<div class="abs" style="left:662.2px;top:505px;width:5.1px;height:8px;background:#2a8df0;"></div>
<div class="abs" style="left:668.3000000000001px;top:505px;width:5.1px;height:8px;background:#2a8df0;"></div>
<div class="abs" style="left:674.4000000000001px;top:505px;width:5.1px;height:8px;background:#2a8df0;"></div>
<div class="abs" style="left:680.5px;top:505px;width:5.1px;height:8px;background:#2a8df0;"></div>
<div class="abs" style="left:686.6px;top:505px;width:5.1px;height:8px;background:#2a8df0;"></div>
<div class="abs" style="left:698px;top:504.3px;width:20.5px;height:9.7px;background:#000;"></div>
<svg class="abs" style="left:698px;top:504.3px" width="20.5" height="9.7" viewBox="0 0 20.5 9.7"><path d="M0.5 5 H4 L5.5 2.5 L7.5 7.5 L9.5 2 L11.5 7 L13 3.5 L14.5 5.5 L16 4.5 H20" stroke="#18c8e8" stroke-width="1" fill="none"/></svg>
<div class="abs" style="left:0px;top:514.5px;width:720px;height:25.5px;background:linear-gradient(to right,#3b73b8 0%,#4884c6 50%,#3c78bd 100%);"></div>
<div class="abs" style="left:0px;top:514.5px;width:720px;height:1px;background:#5a8fcd;"></div>
<div class="abs" style="left:127px;top:515.8px;width:36px;height:23.4px;background:#6294cf;box-sizing:border-box;border:1px solid #7aa5d8"></div>
<div class="abs" style="left:165.5px;top:515.8px;width:36.5px;height:23.4px;background:#6294cf;box-sizing:border-box;border:1px solid #7aa5d8"></div>
<div class="abs" style="left:204px;top:515.8px;width:37px;height:23.4px;background:#6294cf;box-sizing:border-box;border:1px solid #7aa5d8"></div>
<div class="abs" style="left:243px;top:515.8px;width:36px;height:23.4px;background:#6294cf;box-sizing:border-box;border:1px solid #7aa5d8"></div>
<div class="abs" style="left:281.7px;top:515.8px;width:36.6px;height:23.4px;background:#8fb3dc;box-sizing:border-box;border:1px solid #b5cdea"></div>
<svg class="abs" style="left:19px;top:516px" width="20" height="21" viewBox="0 0 20 21"><path d="M2.5 12 A7.3 7.5 0 1 1 17.3 13.2 H7.2 A3.4 3.4 0 0 0 13.3 15 H16.6 A7.3 7.5 0 0 1 2.5 12Z M7.2 10.3 H13.3 A3.1 3.1 0 0 0 7.2 10.3Z" fill="#3bbcf5" fill-rule="evenodd"/><path d="M1.2 17.5 C-1 12 8 2.5 15.5 1.8 C19 1.6 19 4 17.8 6" fill="none" stroke="#f0c23a" stroke-width="1.5"/></svg>
<svg class="abs" style="left:57px;top:518px" width="21" height="18" viewBox="0 0 21 18"><path d="M1 2 H8 L9.5 4 H20 V17 H1Z" fill="#e8c45a"/><rect x="2.5" y="5" width="16" height="5" fill="#fbfbf3"/><path d="M1 8 H20 V17 H1Z" fill="#f7df8c"/><rect x="5.5" y="11.5" width="10" height="5.5" rx="1" fill="#7fb6e6"/><rect x="7" y="13" width="7" height="4" fill="#f7df8c"/></svg>
<svg class="abs" style="left:97px;top:517.5px" width="19" height="19" viewBox="0 0 19 19"><circle cx="9.5" cy="9.5" r="9" fill="#e8453c"/><path d="M9.5 9.5 L1.7 5 A9 9 0 0 0 8 18.4 Z" fill="#3cab59"/><path d="M9.5 9.5 L8 18.4 A9 9 0 0 0 17.8 6 L9.5 6Z" fill="#f7cf3e"/><path d="M9.5 6 H17.8 A9 9 0 0 0 1.7 5 L6 9Z" fill="#e8453c"/><circle cx="9.5" cy="9.5" r="4.2" fill="#f4f4f4"/><circle cx="9.5" cy="9.5" r="3.2" fill="#4a8cf0"/></svg>
<svg class="abs" style="left:134.5px;top:517px" width="21" height="21" viewBox="0 0 21 21"><circle cx="10.5" cy="10.5" r="7.3" fill="none" stroke="#111" stroke-width="6"/><path d="M3.2 10.5 A7.3 7.3 0 0 1 17.8 10.5" fill="none" stroke="#22e022" stroke-width="3.8"/><path d="M17.8 10.5 A7.3 7.3 0 0 1 3.2 10.5" fill="none" stroke="#f2ee20" stroke-width="3.8"/><path d="M0.5 9.5 L3.5 14 L7 9.5Z" fill="#22e022" stroke="#111" stroke-width="0.7"/><path d="M14 11.5 L17.5 7 L20.5 11.5Z" fill="#f2ee20" stroke="#111" stroke-width="0.7"/></svg>
<svg class="abs" style="left:174px;top:517px" width="22" height="21" viewBox="0 0 22 21"><rect x="1" y="0.5" width="15" height="17" fill="#f8f8f8" stroke="#444" stroke-width="0.8"/><rect x="2" y="5.5" width="17" height="5" fill="#fff" stroke="#333" stroke-width="0.9"/><circle cx="3.5" cy="3" r="1" fill="#1a3ae0"/><circle cx="4.2" cy="8" r="1.5" fill="#e01818"/><circle cx="3.5" cy="12.5" r="1.1" fill="#e01818"/><circle cx="3.5" cy="15.3" r="1" fill="#1a3ae0"/><path d="M6 3 H13 M7 8 H17 M6 12.5 H13 M6 15.3 H13" stroke="#999" stroke-width="1.2" stroke-dasharray="1.5,0.8"/><path d="M15 11.5 L19 19" stroke="#b81818" stroke-width="2.4"/></svg>
<svg class="abs" style="left:211.5px;top:517.5px" width="23" height="20" viewBox="0 0 23 20"><path d="M1 3 H8 L9.5 5 H19 V19 H1Z" fill="#e6d548" stroke="#4a4210" stroke-width="0.7"/><rect x="3" y="4.5" width="15" height="10" fill="#fafafa" stroke="#555" stroke-width="0.6"/><path d="M5 12 V6.5 H8 V12 M10 12 V6.5 H13 V12 M15 12 V7" stroke="#222" stroke-width="1" fill="none"/><rect x="15" y="5" width="4" height="3" fill="#30b040"/><rect x="16" y="9" width="4" height="3.5" fill="#e03030"/><path d="M1.5 19 L5 12.5 H22 L18.5 19Z" fill="#8a7a18" stroke="#4a4210" stroke-width="0.7"/></svg>
<svg class="abs" style="left:251.5px;top:516.5px" width="21" height="21" viewBox="0 0 21 21"><path d="M0.8 3 H15 V20 H0.8Z" fill="#f4ea6e" stroke="#5a5210" stroke-width="0.8"/><path d="M5 5 V17 M3 8 H7 M3 13 H7 M5 10.5 H11 L13 15 H10" stroke="#333" stroke-width="0.9" fill="none"/><path d="M10.5 11.5 L12 8.5 L17.5 1.5 L20 3.5 L14 10.5Z" fill="#d01c1c" stroke="#5a0a0a" stroke-width="0.6"/><path d="M10.5 11.5 L12 8.5 L14 10.5Z" fill="#f0d8b0"/></svg>
<svg class="abs" style="left:289px;top:516.5px" width="22" height="22" viewBox="0 0 22 22"><path d="M2 5 H18 V21 H2Z" fill="#f2e65e" stroke="#5a5210" stroke-width="0.8"/><path d="M3 17 L6 14 L9 18 L12 15" stroke="#555" stroke-width="0.8" fill="none"/><rect x="5.5" y="1" width="15" height="12.5" fill="#111" stroke="#e8e8e8" stroke-width="1"/><path d="M7 4 L9.5 10 L12 6 L14.5 10.5 L17 4 L19 7" stroke="#22e022" stroke-width="1.1" fill="none" stroke-dasharray="1.6,0.9"/><rect x="17" y="3" width="1.5" height="1.5" fill="#e02020"/><path d="M7 13.5 L7 16.5 L10 13.5Z" fill="#e8e8e8"/></svg>
<svg class="abs" style="left:603px;top:526px" width="6" height="4" viewBox="0 0 6 4"><path d="M0.3 3.7 L3 0.6 L5.7 3.7Z" fill="#f4f4f4"/></svg>
<svg class="abs" style="left:616px;top:522.5px" width="11" height="10" viewBox="0 0 11 10"><path d="M1.2 0.5 V9.5" stroke="#fff" stroke-width="1.2"/><path d="M2.2 1 H7 L6 2.8 L10 3.5 V6.5 H5 L5.5 5.2 H2.2Z" fill="#fff"/></svg>
<svg class="abs" style="left:631.5px;top:522.5px" width="11" height="10.5" viewBox="0 0 11 10.5"><rect x="3.5" y="0.8" width="6.5" height="5" fill="none" stroke="#fff" stroke-width="1.1"/><path d="M6.7 6 V8.5 M4 9 H9.5" stroke="#fff" stroke-width="1.1"/><rect x="0.6" y="0.6" width="2.5" height="3.5" fill="none" stroke="#fff" stroke-width="0.9"/><path d="M1.8 4 V9.5 H4" stroke="#fff" stroke-width="0.9" fill="none"/></svg>
<svg class="abs" style="left:646px;top:522.5px" width="12" height="10" viewBox="0 0 12 10"><path d="M0.5 3.5 H2.5 L5.5 0.8 V9.2 L2.5 6.5 H0.5Z" fill="#fff"/><path d="M7 3 Q8.3 5 7 7 M8.6 1.8 Q10.6 5 8.6 8.2" stroke="#fff" stroke-width="0.9" fill="none"/></svg>
<div class="t" style="left:677.20px;top:518.50px;font-size:8px;line-height:9.60px;font-family:'Liberation Sans',sans-serif;color:#fff;transform:scaleX(0.8892);-webkit-text-stroke:0;">18:07</div>
<div class="t" style="left:667.30px;top:528.40px;font-size:8px;line-height:9.60px;font-family:'Liberation Sans',sans-serif;color:#fff;transform:scaleX(0.8969);-webkit-text-stroke:0;">2015-01-15</div>
<svg id="plot" width="720" height="540" viewBox="0 0 720 540" style="position:absolute;left:0;top:0">
<rect x="28" y="81.3" width="682.8" height="314.1" fill="#000"/>
<line x1="86.92" y1="86.5" x2="86.92" y2="362.5" stroke="#c4c4c4" stroke-width="0.9" stroke-dasharray="1.9,1.85"/>
<line x1="99.54" y1="86.5" x2="99.54" y2="362.5" stroke="#c4c4c4" stroke-width="0.9" stroke-dasharray="1.9,1.85"/>
<line x1="112.16" y1="86.5" x2="112.16" y2="362.5" stroke="#c4c4c4" stroke-width="0.9" stroke-dasharray="1.9,1.85"/>
<line x1="124.78" y1="86.5" x2="124.78" y2="362.5" stroke="#c4c4c4" stroke-width="0.9" stroke-dasharray="1.9,1.85"/>
<line x1="150.02" y1="86.5" x2="150.02" y2="362.5" stroke="#c4c4c4" stroke-width="0.9" stroke-dasharray="1.9,1.85"/>
<line x1="162.64" y1="86.5" x2="162.64" y2="362.5" stroke="#c4c4c4" stroke-width="0.9" stroke-dasharray="1.9,1.85"/>
<line x1="175.26" y1="86.5" x2="175.26" y2="362.5" stroke="#c4c4c4" stroke-width="0.9" stroke-dasharray="1.9,1.85"/>
<line x1="187.88" y1="86.5" x2="187.88" y2="362.5" stroke="#c4c4c4" stroke-width="0.9" stroke-dasharray="1.9,1.85"/>
<line x1="213.12" y1="86.5" x2="213.12" y2="362.5" stroke="#c4c4c4" stroke-width="0.9" stroke-dasharray="1.9,1.85"/>
<line x1="225.74" y1="86.5" x2="225.74" y2="362.5" stroke="#c4c4c4" stroke-width="0.9" stroke-dasharray="1.9,1.85"/>
<line x1="238.36" y1="86.5" x2="238.36" y2="362.5" stroke="#c4c4c4" stroke-width="0.9" stroke-dasharray="1.9,1.85"/>
<line x1="250.98" y1="86.5" x2="250.98" y2="362.5" stroke="#c4c4c4" stroke-width="0.9" stroke-dasharray="1.9,1.85"/>
<line x1="276.22" y1="86.5" x2="276.22" y2="362.5" stroke="#c4c4c4" stroke-width="0.9" stroke-dasharray="1.9,1.85"/>
<line x1="288.84" y1="86.5" x2="288.84" y2="362.5" stroke="#c4c4c4" stroke-width="0.9" stroke-dasharray="1.9,1.85"/>
<line x1="301.46" y1="86.5" x2="301.46" y2="362.5" stroke="#c4c4c4" stroke-width="0.9" stroke-dasharray="1.9,1.85"/>
<line x1="314.08" y1="86.5" x2="314.08" y2="362.5" stroke="#c4c4c4" stroke-width="0.9" stroke-dasharray="1.9,1.85"/>
<line x1="339.32" y1="86.5" x2="339.32" y2="362.5" stroke="#c4c4c4" stroke-width="0.9" stroke-dasharray="1.9,1.85"/>
<line x1="351.94" y1="86.5" x2="351.94" y2="362.5" stroke="#c4c4c4" stroke-width="0.9" stroke-dasharray="1.9,1.85"/>
<line x1="364.56" y1="86.5" x2="364.56" y2="362.5" stroke="#c4c4c4" stroke-width="0.9" stroke-dasharray="1.9,1.85"/>
<line x1="377.18" y1="86.5" x2="377.18" y2="362.5" stroke="#c4c4c4" stroke-width="0.9" stroke-dasharray="1.9,1.85"/>
<line x1="402.42" y1="86.5" x2="402.42" y2="362.5" stroke="#c4c4c4" stroke-width="0.9" stroke-dasharray="1.9,1.85"/>
<line x1="415.04" y1="86.5" x2="415.04" y2="362.5" stroke="#c4c4c4" stroke-width="0.9" stroke-dasharray="1.9,1.85"/>
<line x1="427.66" y1="86.5" x2="427.66" y2="362.5" stroke="#c4c4c4" stroke-width="0.9" stroke-dasharray="1.9,1.85"/>
<line x1="440.28" y1="86.5" x2="440.28" y2="362.5" stroke="#c4c4c4" stroke-width="0.9" stroke-dasharray="1.9,1.85"/>
<line x1="465.52" y1="86.5" x2="465.52" y2="362.5" stroke="#c4c4c4" stroke-width="0.9" stroke-dasharray="1.9,1.85"/>
<line x1="478.14" y1="86.5" x2="478.14" y2="362.5" stroke="#c4c4c4" stroke-width="0.9" stroke-dasharray="1.9,1.85"/>
<line x1="490.76" y1="86.5" x2="490.76" y2="362.5" stroke="#c4c4c4" stroke-width="0.9" stroke-dasharray="1.9,1.85"/>
<line x1="503.38" y1="86.5" x2="503.38" y2="362.5" stroke="#c4c4c4" stroke-width="0.9" stroke-dasharray="1.9,1.85"/>
<line x1="528.62" y1="86.5" x2="528.62" y2="362.5" stroke="#c4c4c4" stroke-width="0.9" stroke-dasharray="1.9,1.85"/>
<line x1="541.24" y1="86.5" x2="541.24" y2="362.5" stroke="#c4c4c4" stroke-width="0.9" stroke-dasharray="1.9,1.85"/>
<line x1="553.86" y1="86.5" x2="553.86" y2="362.5" stroke="#c4c4c4" stroke-width="0.9" stroke-dasharray="1.9,1.85"/>
<line x1="566.48" y1="86.5" x2="566.48" y2="362.5" stroke="#c4c4c4" stroke-width="0.9" stroke-dasharray="1.9,1.85"/>
<line x1="591.72" y1="86.5" x2="591.72" y2="362.5" stroke="#c4c4c4" stroke-width="0.9" stroke-dasharray="1.9,1.85"/>
<line x1="604.34" y1="86.5" x2="604.34" y2="362.5" stroke="#c4c4c4" stroke-width="0.9" stroke-dasharray="1.9,1.85"/>
<line x1="616.96" y1="86.5" x2="616.96" y2="362.5" stroke="#c4c4c4" stroke-width="0.9" stroke-dasharray="1.9,1.85"/>
<line x1="629.58" y1="86.5" x2="629.58" y2="362.5" stroke="#c4c4c4" stroke-width="0.9" stroke-dasharray="1.9,1.85"/>
<line x1="654.82" y1="86.5" x2="654.82" y2="362.5" stroke="#c4c4c4" stroke-width="0.9" stroke-dasharray="1.9,1.85"/>
<line x1="667.44" y1="86.5" x2="667.44" y2="362.5" stroke="#c4c4c4" stroke-width="0.9" stroke-dasharray="1.9,1.85"/>
<line x1="680.06" y1="86.5" x2="680.06" y2="362.5" stroke="#c4c4c4" stroke-width="0.9" stroke-dasharray="1.9,1.85"/>
<line x1="692.68" y1="86.5" x2="692.68" y2="362.5" stroke="#c4c4c4" stroke-width="0.9" stroke-dasharray="1.9,1.85"/>
<line x1="74.3" y1="103.75" x2="705.3" y2="103.75" stroke="#c4c4c4" stroke-width="0.9" stroke-dasharray="2.1,1.65"/>
<line x1="74.3" y1="121.00" x2="705.3" y2="121.00" stroke="#c4c4c4" stroke-width="0.9" stroke-dasharray="2.1,1.65"/>
<line x1="74.3" y1="138.25" x2="705.3" y2="138.25" stroke="#c4c4c4" stroke-width="0.9" stroke-dasharray="2.1,1.65"/>
<line x1="74.3" y1="172.75" x2="705.3" y2="172.75" stroke="#c4c4c4" stroke-width="0.9" stroke-dasharray="2.1,1.65"/>
<line x1="74.3" y1="190.00" x2="705.3" y2="190.00" stroke="#c4c4c4" stroke-width="0.9" stroke-dasharray="2.1,1.65"/>
<line x1="74.3" y1="207.25" x2="705.3" y2="207.25" stroke="#c4c4c4" stroke-width="0.9" stroke-dasharray="2.1,1.65"/>
<line x1="74.3" y1="241.75" x2="705.3" y2="241.75" stroke="#c4c4c4" stroke-width="0.9" stroke-dasharray="2.1,1.65"/>
<line x1="74.3" y1="259.00" x2="705.3" y2="259.00" stroke="#c4c4c4" stroke-width="0.9" stroke-dasharray="2.1,1.65"/>
<line x1="74.3" y1="276.25" x2="705.3" y2="276.25" stroke="#c4c4c4" stroke-width="0.9" stroke-dasharray="2.1,1.65"/>
<line x1="74.3" y1="310.75" x2="705.3" y2="310.75" stroke="#c4c4c4" stroke-width="0.9" stroke-dasharray="2.1,1.65"/>
<line x1="74.3" y1="328.00" x2="705.3" y2="328.00" stroke="#c4c4c4" stroke-width="0.9" stroke-dasharray="2.1,1.65"/>
<line x1="74.3" y1="345.25" x2="705.3" y2="345.25" stroke="#c4c4c4" stroke-width="0.9" stroke-dasharray="2.1,1.65"/>
<line x1="74.50" y1="86.5" x2="74.50" y2="365.5" stroke="#8a8a8a" stroke-width="1"/>
<line x1="137.50" y1="86.5" x2="137.50" y2="365.5" stroke="#aaaaaa" stroke-width="1"/>
<line x1="200.50" y1="86.5" x2="200.50" y2="365.5" stroke="#aaaaaa" stroke-width="1"/>
<line x1="263.50" y1="86.5" x2="263.50" y2="365.5" stroke="#aaaaaa" stroke-width="1"/>
<line x1="326.50" y1="86.5" x2="326.50" y2="365.5" stroke="#aaaaaa" stroke-width="1"/>
<line x1="389.50" y1="86.5" x2="389.50" y2="365.5" stroke="#aaaaaa" stroke-width="1"/>
<line x1="452.50" y1="86.5" x2="452.50" y2="365.5" stroke="#aaaaaa" stroke-width="1"/>
<line x1="516.50" y1="86.5" x2="516.50" y2="365.5" stroke="#aaaaaa" stroke-width="1"/>
<line x1="579.50" y1="86.5" x2="579.50" y2="365.5" stroke="#aaaaaa" stroke-width="1"/>
<line x1="642.50" y1="86.5" x2="642.50" y2="365.5" stroke="#aaaaaa" stroke-width="1"/>
<line x1="705.50" y1="86.5" x2="705.50" y2="365.5" stroke="#aaaaaa" stroke-width="1"/>
<line x1="71.3" y1="86.50" x2="705.3" y2="86.50" stroke="#aaaaaa" stroke-width="1"/>
<line x1="71.3" y1="155.50" x2="705.3" y2="155.50" stroke="#aaaaaa" stroke-width="1"/>
<line x1="71.3" y1="224.50" x2="705.3" y2="224.50" stroke="#aaaaaa" stroke-width="1"/>
<line x1="71.3" y1="293.50" x2="705.3" y2="293.50" stroke="#aaaaaa" stroke-width="1"/>
<line x1="71.3" y1="362.50" x2="705.3" y2="362.50" stroke="#aaaaaa" stroke-width="1"/>
<line x1="74.3" y1="190.5" x2="705.3" y2="190.5" stroke="#d8443c" stroke-width="1"/>
<polyline points="74.30,224.50 77.00,224.50 79.50,105.00 81.00,86.50 128.50,86.50 130.00,90.00 137.30,172.50 142.50,224.50 196.00,224.50 205.00,221.00 217.50,86.50 255.50,86.50 262.50,155.00 268.75,224.50 325.00,224.50 331.00,221.00 344.00,86.50 381.00,86.50 386.00,139.00 394.50,224.50 457.00,224.50 457.00,192.50 458.00,155.00 459.00,103.00 459.50,86.50 500.00,86.50 503.00,119.00 506.00,155.00 512.50,210.00 515.00,224.50 580.00,224.50 581.25,218.00 584.00,129.00 585.50,86.50 632.50,86.50 636.00,130.00 639.50,178.00 643.75,224.50 705.00,224.50" fill="none" stroke="#2fe22f" stroke-width="1"/>
<polyline points="74.30,224.50 84.00,157.50 91.70,115.80 97.50,101.70 104.70,86.70 112.50,100.00 117.50,108.30 123.30,143.30 128.30,166.70 131.70,189.00 137.50,224.50 145.75,279.50 148.75,295.00 153.75,320.00 160.00,341.00 167.50,362.50 169.50,357.50 180.00,341.00 183.75,320.00 188.75,292.50 193.25,270.00 200.00,224.50 207.00,179.00 211.00,155.00 216.00,120.00 224.00,99.00 227.50,90.00 231.00,86.50 244.00,109.00 250.00,140.00 255.50,167.50 263.75,224.50 268.00,258.00 275.00,295.00 281.00,331.00 287.50,347.00 293.25,362.00 305.50,343.75 307.50,335.00 311.25,320.00 315.75,290.00 326.00,224.50 330.00,199.00 335.00,165.00 341.00,125.00 347.50,109.00 356.00,86.50 370.00,109.50 377.00,149.00 390.00,224.50 392.00,239.50 407.50,330.00 419.50,361.00 432.00,343.75 433.75,335.00 438.75,308.75 452.50,224.50 458.00,192.00 464.00,147.50 468.00,127.50 475.00,101.00 488.00,89.00 492.50,105.00 501.00,132.00 506.00,162.50 514.00,215.00 515.75,221.00 530.00,311.00 538.75,347.50 550.75,360.00 562.00,324.50 566.25,295.00 577.50,235.00 580.00,224.50 587.50,162.50 591.00,144.00 596.00,120.00 606.00,90.00 619.00,97.50 623.00,116.00 630.00,142.50 639.00,207.50 642.50,224.50 653.25,296.75 668.75,358.75 681.25,351.25 684.50,338.75 701.25,248.75 705.00,225.00" fill="none" stroke="#5a1ee6" stroke-width="1"/>
<rect x="75.30" y="220.30" width="4.4" height="4.4" fill="none" stroke="#2fe22f" stroke-width="0.85"/>
<rect x="77.30" y="129.80" width="4.4" height="4.4" fill="none" stroke="#2fe22f" stroke-width="0.85"/>
<rect x="123.10" y="84.80" width="4.4" height="4.4" fill="none" stroke="#2fe22f" stroke-width="0.85"/>
<rect x="135.00" y="170.30" width="4.4" height="4.4" fill="none" stroke="#2fe22f" stroke-width="0.85"/>
<rect x="177.30" y="222.30" width="4.4" height="4.4" fill="none" stroke="#2fe22f" stroke-width="0.85"/>
<rect x="208.80" y="156.80" width="4.4" height="4.4" fill="none" stroke="#2fe22f" stroke-width="0.85"/>
<rect x="260.30" y="152.80" width="4.4" height="4.4" fill="none" stroke="#2fe22f" stroke-width="0.85"/>
<rect x="286.55" y="222.30" width="4.4" height="4.4" fill="none" stroke="#2fe22f" stroke-width="0.85"/>
<rect x="333.80" y="173.80" width="4.4" height="4.4" fill="none" stroke="#2fe22f" stroke-width="0.85"/>
<rect x="341.80" y="85.30" width="4.4" height="4.4" fill="none" stroke="#2fe22f" stroke-width="0.85"/>
<rect x="383.80" y="136.80" width="4.4" height="4.4" fill="none" stroke="#2fe22f" stroke-width="0.85"/>
<rect x="396.05" y="222.30" width="4.4" height="4.4" fill="none" stroke="#2fe22f" stroke-width="0.85"/>
<rect x="454.80" y="190.30" width="4.4" height="4.4" fill="none" stroke="#2fe22f" stroke-width="0.85"/>
<rect x="456.80" y="100.80" width="4.4" height="4.4" fill="none" stroke="#2fe22f" stroke-width="0.85"/>
<rect x="500.80" y="116.80" width="4.4" height="4.4" fill="none" stroke="#2fe22f" stroke-width="0.85"/>
<rect x="510.30" y="205.80" width="4.4" height="4.4" fill="none" stroke="#2fe22f" stroke-width="0.85"/>
<rect x="579.05" y="216.55" width="4.4" height="4.4" fill="none" stroke="#2fe22f" stroke-width="0.85"/>
<rect x="581.80" y="126.80" width="4.4" height="4.4" fill="none" stroke="#2fe22f" stroke-width="0.85"/>
<rect x="629.30" y="86.80" width="4.4" height="4.4" fill="none" stroke="#2fe22f" stroke-width="0.85"/>
<rect x="637.30" y="175.80" width="4.4" height="4.4" fill="none" stroke="#2fe22f" stroke-width="0.85"/>
<rect x="685.30" y="222.30" width="4.4" height="4.4" fill="none" stroke="#2fe22f" stroke-width="0.85"/>
<path d="M81.60 155.90 L86.40 155.90 L84.00 160.10 Z" fill="none" stroke="#5a1ee6" stroke-width="0.8"/>
<path d="M110.10 98.40 L114.90 98.40 L112.50 102.60 Z" fill="none" stroke="#5a1ee6" stroke-width="0.8"/>
<path d="M129.30 187.40 L134.10 187.40 L131.70 191.60 Z" fill="none" stroke="#5a1ee6" stroke-width="0.8"/>
<path d="M143.35 277.90 L148.15 277.90 L145.75 282.10 Z" fill="none" stroke="#5a1ee6" stroke-width="0.8"/>
<path d="M167.10 355.90 L171.90 355.90 L169.50 360.10 Z" fill="none" stroke="#5a1ee6" stroke-width="0.8"/>
<path d="M190.85 268.40 L195.65 268.40 L193.25 272.60 Z" fill="none" stroke="#5a1ee6" stroke-width="0.8"/>
<path d="M204.60 177.40 L209.40 177.40 L207.00 181.60 Z" fill="none" stroke="#5a1ee6" stroke-width="0.8"/>
<path d="M225.10 88.40 L229.90 88.40 L227.50 92.60 Z" fill="none" stroke="#5a1ee6" stroke-width="0.8"/>
<path d="M253.10 165.90 L257.90 165.90 L255.50 170.10 Z" fill="none" stroke="#5a1ee6" stroke-width="0.8"/>
<path d="M265.60 256.40 L270.40 256.40 L268.00 260.60 Z" fill="none" stroke="#5a1ee6" stroke-width="0.8"/>
<path d="M285.10 345.40 L289.90 345.40 L287.50 349.60 Z" fill="none" stroke="#5a1ee6" stroke-width="0.8"/>
<path d="M313.35 288.40 L318.15 288.40 L315.75 292.60 Z" fill="none" stroke="#5a1ee6" stroke-width="0.8"/>
<path d="M327.60 197.40 L332.40 197.40 L330.00 201.60 Z" fill="none" stroke="#5a1ee6" stroke-width="0.8"/>
<path d="M345.10 107.40 L349.90 107.40 L347.50 111.60 Z" fill="none" stroke="#5a1ee6" stroke-width="0.8"/>
<path d="M374.60 147.40 L379.40 147.40 L377.00 151.60 Z" fill="none" stroke="#5a1ee6" stroke-width="0.8"/>
<path d="M389.60 237.90 L394.40 237.90 L392.00 242.10 Z" fill="none" stroke="#5a1ee6" stroke-width="0.8"/>
<path d="M405.10 328.40 L409.90 328.40 L407.50 332.60 Z" fill="none" stroke="#5a1ee6" stroke-width="0.8"/>
<path d="M436.35 307.15 L441.15 307.15 L438.75 311.35 Z" fill="none" stroke="#5a1ee6" stroke-width="0.8"/>
<path d="M450.60 217.15 L455.40 217.15 L453.00 221.35 Z" fill="none" stroke="#5a1ee6" stroke-width="0.8"/>
<path d="M465.60 125.90 L470.40 125.90 L468.00 130.10 Z" fill="none" stroke="#5a1ee6" stroke-width="0.8"/>
<path d="M498.60 130.40 L503.40 130.40 L501.00 134.60 Z" fill="none" stroke="#5a1ee6" stroke-width="0.8"/>
<path d="M513.35 219.40 L518.15 219.40 L515.75 223.60 Z" fill="none" stroke="#5a1ee6" stroke-width="0.8"/>
<path d="M527.60 309.40 L532.40 309.40 L530.00 313.60 Z" fill="none" stroke="#5a1ee6" stroke-width="0.8"/>
<path d="M559.60 322.90 L564.40 322.90 L562.00 327.10 Z" fill="none" stroke="#5a1ee6" stroke-width="0.8"/>
<path d="M575.10 233.40 L579.90 233.40 L577.50 237.60 Z" fill="none" stroke="#5a1ee6" stroke-width="0.8"/>
<path d="M588.60 142.40 L593.40 142.40 L591.00 146.60 Z" fill="none" stroke="#5a1ee6" stroke-width="0.8"/>
<path d="M620.60 114.40 L625.40 114.40 L623.00 118.60 Z" fill="none" stroke="#5a1ee6" stroke-width="0.8"/>
<path d="M636.60 205.90 L641.40 205.90 L639.00 210.10 Z" fill="none" stroke="#5a1ee6" stroke-width="0.8"/>
<path d="M650.85 295.15 L655.65 295.15 L653.25 299.35 Z" fill="none" stroke="#5a1ee6" stroke-width="0.8"/>
<path d="M682.10 337.15 L686.90 337.15 L684.50 341.35 Z" fill="none" stroke="#5a1ee6" stroke-width="0.8"/>
<path d="M698.85 247.15 L703.65 247.15 L701.25 251.35 Z" fill="none" stroke="#5a1ee6" stroke-width="0.8"/>
<path d="M107.50 190.50 L109.50 188.50 L111.50 190.50 L109.50 192.50 Z" fill="none" stroke="#d8443c" stroke-width="0.9"/>
<path d="M197.50 190.50 L199.50 188.50 L201.50 190.50 L199.50 192.50 Z" fill="none" stroke="#d8443c" stroke-width="0.9"/>
<path d="M287.50 190.50 L289.50 188.50 L291.50 190.50 L289.50 192.50 Z" fill="none" stroke="#d8443c" stroke-width="0.9"/>
<path d="M377.50 190.50 L379.50 188.50 L381.50 190.50 L379.50 192.50 Z" fill="none" stroke="#d8443c" stroke-width="0.9"/>
<path d="M467.50 190.50 L469.50 188.50 L471.50 190.50 L469.50 192.50 Z" fill="none" stroke="#d8443c" stroke-width="0.9"/>
<path d="M557.50 190.50 L559.50 188.50 L561.50 190.50 L559.50 192.50 Z" fill="none" stroke="#d8443c" stroke-width="0.9"/>
<path d="M647.50 190.50 L649.50 188.50 L651.50 190.50 L649.50 192.50 Z" fill="none" stroke="#d8443c" stroke-width="0.9"/>
<rect x="75" y="380" width="4" height="4" fill="none" stroke="#2fe22f" stroke-width="1"/>
<path d="M125 382 L127 380 L129 382 L127 384 Z" fill="none" stroke="#d8443c" stroke-width="0.9"/>
<path d="M175 380.5 L179 380.5 L177 384 Z" fill="none" stroke="#5a1ee6" stroke-width="0.9"/>
</svg>
<div class="ax" style="right:650.6px;top:82.3px;text-align:right">4.0V</div>
<div class="ax" style="right:650.6px;top:151.3px;text-align:right">2.0V</div>
<div class="ax" style="right:650.6px;top:220.3px;text-align:right">0V</div>
<div class="ax" style="right:650.6px;top:289.3px;text-align:right">-2.0V</div>
<div class="ax" style="right:650.6px;top:358.3px;text-align:right">-4.0V</div>
<div class="ax" style="left:24.299999999999997px;width:100px;top:367.9px;text-align:center">0s</div>
<div class="ax" style="left:87.4px;width:100px;top:367.9px;text-align:center">0.5ms</div>
<div class="ax" style="left:150.5px;width:100px;top:367.9px;text-align:center">1.0ms</div>
<div class="ax" style="left:213.60000000000002px;width:100px;top:367.9px;text-align:center">1.5ms</div>
<div class="ax" style="left:276.7px;width:100px;top:367.9px;text-align:center">2.0ms</div>
<div class="ax" style="left:339.8px;width:100px;top:367.9px;text-align:center">2.5ms</div>
<div class="ax" style="left:402.90000000000003px;width:100px;top:367.9px;text-align:center">3.0ms</div>
<div class="ax" style="left:466.0px;width:100px;top:367.9px;text-align:center">3.5ms</div>
<div class="ax" style="left:529.1px;width:100px;top:367.9px;text-align:center">4.0ms</div>
<div class="ax" style="left:592.1999999999999px;width:100px;top:367.9px;text-align:center">4.5ms</div>
<div class="ax" style="right:14.5px;top:367.9px;text-align:right">5.0ms</div>
<div class="ax" style="left:84px;top:377.9px">V(M6:d)</div>
<div class="ax" style="left:134px;top:377.9px">V(V8:+)</div>
<div class="ax" style="left:184px;top:377.9px">V(V11:+)</div>
<div class="ax" style="left:340px;width:100px;top:386.6px;text-align:center">Time</div>
</body></html>
